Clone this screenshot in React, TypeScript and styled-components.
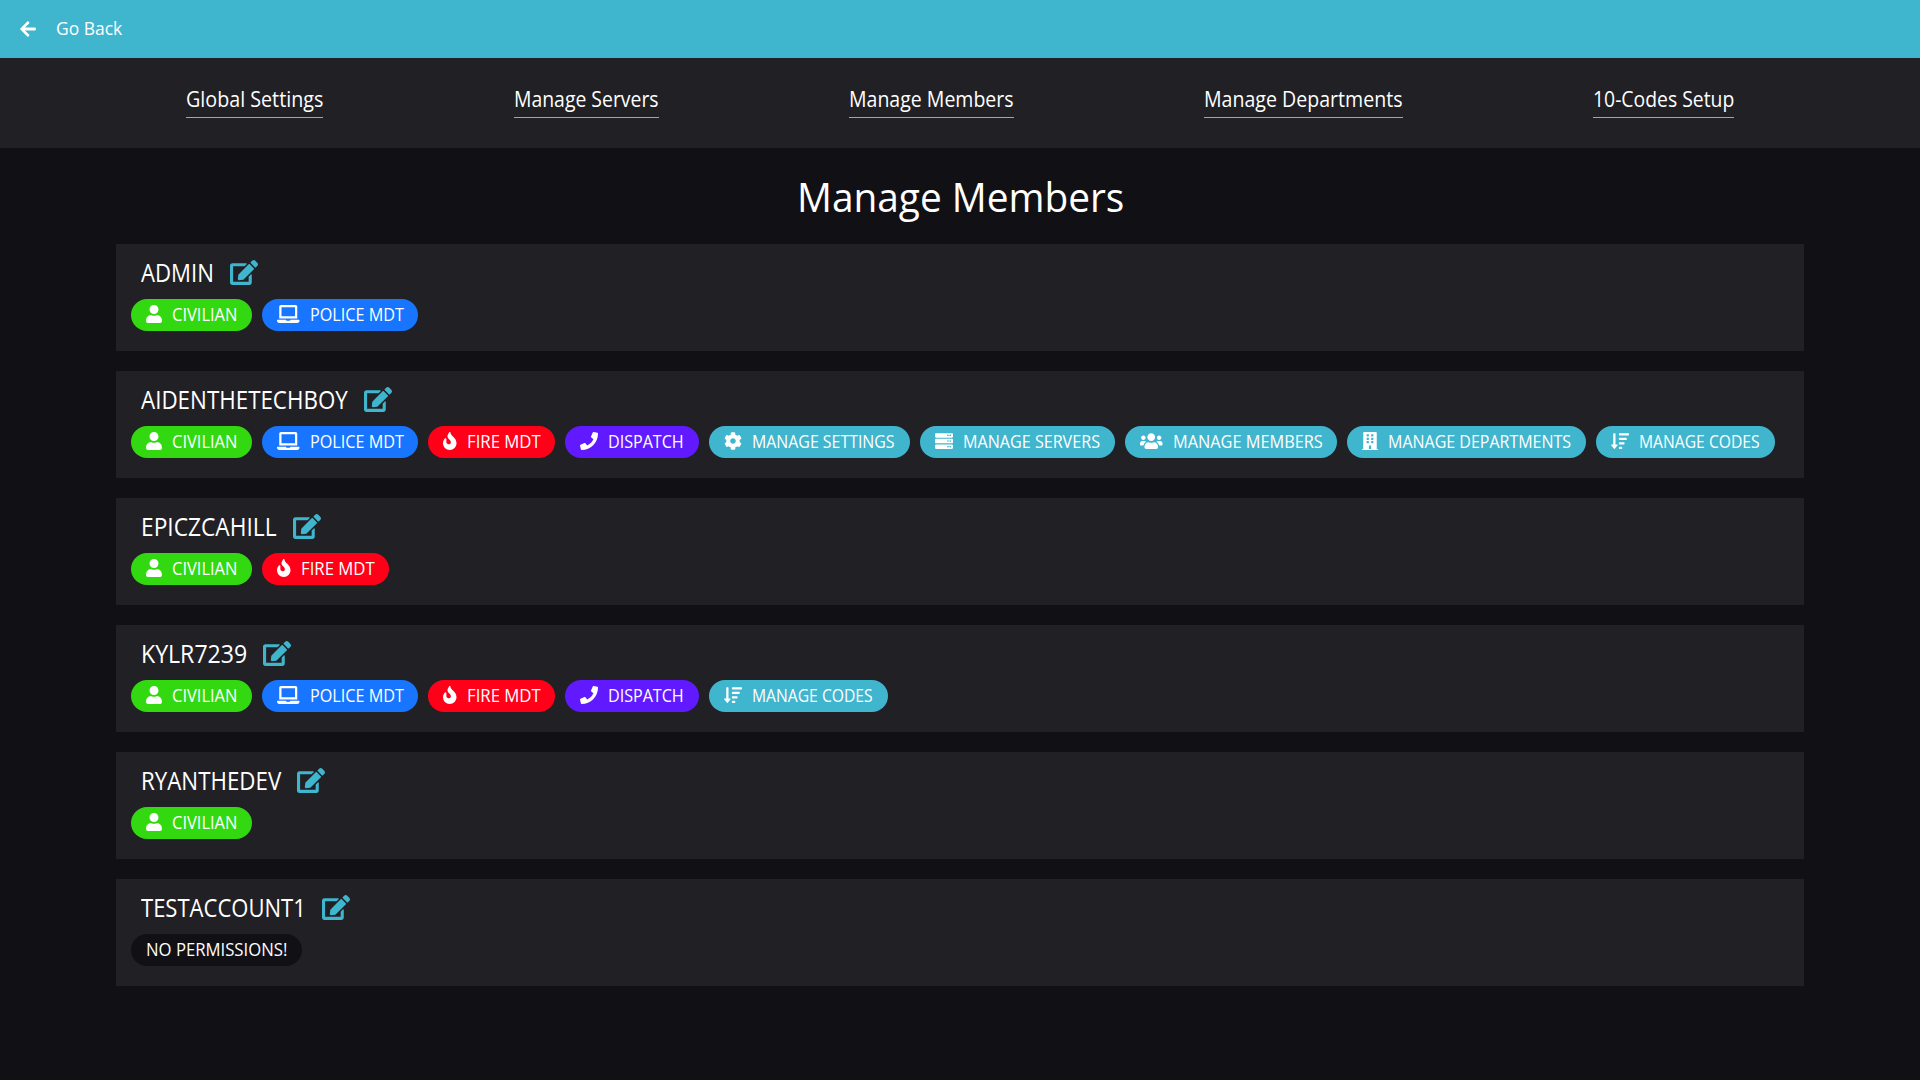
import React, { useLayoutEffect, useRef, useState } from 'react';
import styled, { createGlobalStyle } from 'styled-components';
import type { IconType } from 'react-icons';
import {
  FaArrowLeft, FaUser, FaLaptop, FaFire, FaPhone, FaCog, FaServer,
  FaUsers, FaBuilding, FaSortAmountDown, FaEdit,
} from 'react-icons/fa';

const GlobalStyle = createGlobalStyle`
  * { box-sizing: border-box; }
  body {
    margin: 0;
    min-height: 100vh;
    background: #111015;
    color: #fff;
    font-family: "Open Sans", "Noto Sans", sans-serif;
    font-weight: 500;
  }
`;

const Box = styled.span<{ $w: number }>`
  display: inline-block;
  flex: none;
  width: ${p => p.$w}px;
  white-space: nowrap;
`;

const Inner = styled.span`
  display: inline-block;
  transform-origin: 0 50%;
`;

/** A label condensed or widened to take exactly the given width. */
function Fit({ w, children }: { w: number; children: string }) {
  const ref = useRef<HTMLSpanElement>(null);
  const [scale, setScale] = useState(1);
  useLayoutEffect(() => {
    if (ref.current) setScale(w / ref.current.offsetWidth);
  }, [w, children]);
  return (
    <Box $w={w}>
      <Inner ref={ref} style={{ transform: `scaleX(${scale})` }}>{children}</Inner>
    </Box>
  );
}

const TopBar = styled.header`
  display: flex;
  align-items: center;
  gap: 19px;
  height: 58px;
  padding-left: 19px;
  background: #3fb5ce;
  font-size: 18px;
  line-height: 24px;
  svg { display: block; width: 18px; height: 18px; }
  ${Box} { padding-bottom: 2px; }
`;

const Nav = styled.nav`
  display: flex;
  justify-content: space-between;
  align-items: flex-start;
  height: 90px;
  padding: 26px 186px 0;
  background: #212025;
`;

const NavLink = styled.a`
  display: block;
  height: 34px;
  border-bottom: 1px solid #a5a5a8;
  font-size: 21px;
  line-height: 31px;
`;

const Title = styled.h1`
  margin: 0;
  height: 96px;
  padding-top: 19px;
  text-align: center;
  font-size: 40px;
  font-weight: 450;
  line-height: 60px;
`;

const List = styled.main`
  display: flex;
  flex-direction: column;
  gap: 20px;
  padding: 0 116px;
`;

const Card = styled.section`
  height: 107px;
  padding: 12px 15px 0;
  background: #212025;
`;

const NameRow = styled.div`
  display: flex;
  align-items: center;
  gap: 16px;
  height: 32px;
  padding-left: 10px;
  font-size: 25.5px;
  font-weight: 450;
  line-height: 32px;
  svg { display: block; width: 28px; height: 25px; color: #3fb5ce; }
`;

const Badges = styled.div`
  display: flex;
  gap: 10px;
  margin-top: 11px;
`;

const Badge = styled.div<{ $bg: string }>`
  display: flex;
  align-items: flex-start;
  gap: 10px;
  height: 32px;
  padding: 0 15px;
  border-radius: 16px;
  background: ${p => p.$bg};
  font-size: 18px;
  line-height: 30px;
`;

const Glyph = styled.span<{ $w: number }>`
  flex: none;
  width: ${p => p.$w}px;
  padding-top: 6px;
  svg { display: block; width: 100%; height: 18px; }
`;

type Perm = { label: string; w: number; bg: string; icon?: IconType; iw: number };

const teal = '#3fb5ce';
const perms: Record<string, Perm> = {
  civ: { label: 'CIVILIAN', w: 65, bg: '#33d910', icon: FaUser, iw: 16 },
  police: { label: 'POLICE MDT', w: 93.5, bg: '#1775ff', icon: FaLaptop, iw: 22.5 },
  fire: { label: 'FIRE MDT', w: 73.5, bg: '#ff0018', icon: FaFire, iw: 13.5 },
  dispatch: { label: 'DISPATCH', w: 76, bg: '#611aff', icon: FaPhone, iw: 18 },
  settings: { label: 'MANAGE SETTINGS', w: 143, bg: teal, icon: FaCog, iw: 18 },
  servers: { label: 'MANAGE SERVERS', w: 137, bg: teal, icon: FaServer, iw: 18 },
  members: { label: 'MANAGE MEMBERS', w: 149.5, bg: teal, icon: FaUsers, iw: 22.5 },
  departments: { label: 'MANAGE DEPARTMENTS', w: 183, bg: teal, icon: FaBuilding, iw: 16 },
  codes: { label: 'MANAGE CODES', w: 121, bg: teal, icon: FaSortAmountDown, iw: 18 },
  none: { label: 'NO PERMISSIONS!', w: 141, bg: '#111015', iw: 0 },
};

const links: [string, number][] = [
  ['Global Settings', 137], ['Manage Servers', 145], ['Manage Members', 164.5],
  ['Manage Departments', 198.5], ['10-Codes Setup', 141],
];

const members: { name: string; w: number; perms: string[] }[] = [
  { name: 'ADMIN', w: 73, perms: ['civ', 'police'] },
  {
    name: 'AIDENTHETECHBOY', w: 207,
    perms: ['civ', 'police', 'fire', 'dispatch', 'settings', 'servers', 'members', 'departments', 'codes'],
  },
  { name: 'EPICZCAHILL', w: 135.5, perms: ['civ', 'fire'] },
  { name: 'KYLR7239', w: 106, perms: ['civ', 'police', 'fire', 'dispatch', 'codes'] },
  { name: 'RYANTHEDEV', w: 140, perms: ['civ'] },
  { name: 'TESTACCOUNT1', w: 165, perms: ['none'] },
];

export default function App() {
  return (
    <>
      <GlobalStyle />
      <TopBar><FaArrowLeft /><Fit w={66}>Go Back</Fit></TopBar>
      <Nav>
        {links.map(([label, w]) => (
          <NavLink key={label}><Fit w={w}>{label}</Fit></NavLink>
        ))}
      </Nav>
      <Title><Fit w={327}>Manage Members</Fit></Title>
      <List>
        {members.map(m => (
          <Card key={m.name}>
            <NameRow><Fit w={m.w}>{m.name}</Fit><FaEdit /></NameRow>
            <Badges>
              {m.perms.map(id => {
                const { label, w, bg, icon: Icon, iw } = perms[id];
                return (
                  <Badge key={id} $bg={bg}>
                    {Icon && <Glyph $w={iw}><Icon /></Glyph>}
                    <Fit w={w}>{label}</Fit>
                  </Badge>
                );
              })}
            </Badges>
          </Card>
        ))}
      </List>
    </>
  );
}
